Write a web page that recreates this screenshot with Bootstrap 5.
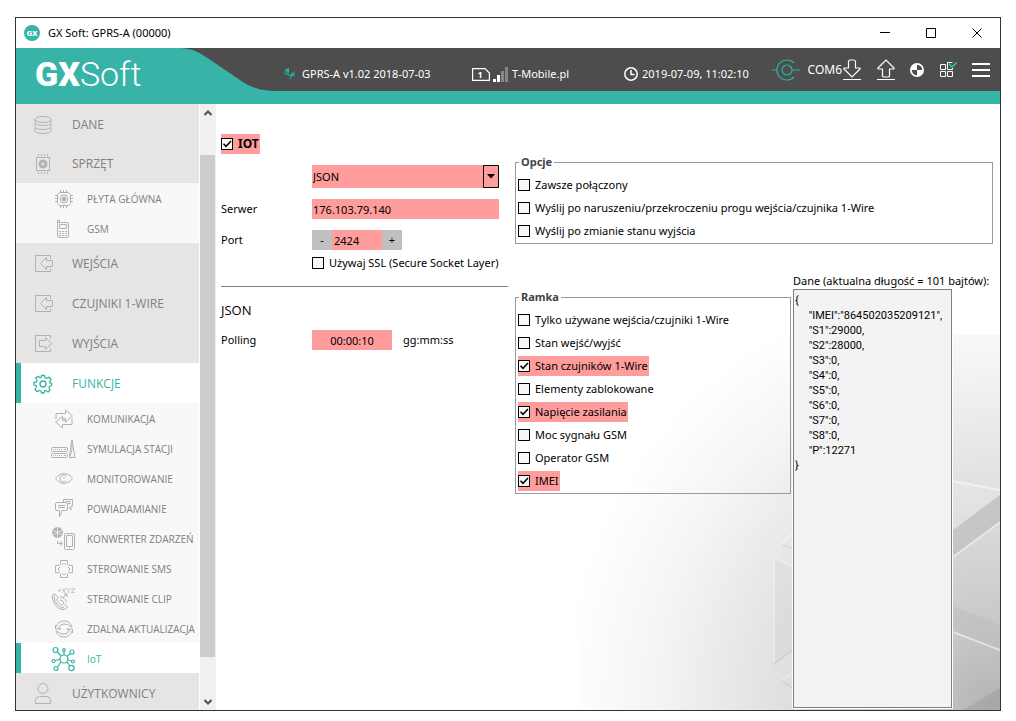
<!DOCTYPE html>
<html lang="pl">
<head>
<meta charset="utf-8">
<meta name="viewport" content="width=device-width, initial-scale=1">
<title>GX Soft: GPRS-A (00000)</title>
<link href="https://cdn.jsdelivr.net/npm/bootstrap@5.3.0/dist/css/bootstrap.min.css" rel="stylesheet">
<style>
:root{--teal:#37b3a8;--dark:#4d4d4d;--pink:#ff9c9c}
body{font-family:"Noto Sans","Open Sans",sans-serif;font-size:11px;line-height:16px;color:#000;background:#fff}
.page{height:100vh;padding:17px 15px 10px}
.window{border:1px solid #333;background:#fff}
svg{display:block;flex:none;fill:none}
button{border:0;background:none;padding:0;color:inherit}
.titlebar{height:30px;padding-left:8px}
.winbtn{width:46px;height:28px}
.topbar{background:var(--dark);border-bottom:13px solid var(--teal);height:56px;color:#fff}
.brand-area{width:268px;height:43px;position:relative}
.brand-area svg{position:absolute;top:0;left:0}
.brand-text{position:relative;font:300 34px/52px Roboto,sans-serif;color:#fff;padding-left:19px}
.brand-text b{font-weight:900}
.info{padding-top:9px}
.info-device{width:188px;gap:6px}
.info-net{width:152px}
.tools{gap:15px;padding-right:10px}
.port-name{font-size:12px}
.sidebar{width:183px;background:#f8f8f8;margin-right:1px;font-family:"Open Sans",sans-serif}
.sidebar a{display:flex;align-items:center;color:#808080;text-decoration:none;border-left:5px solid transparent;flex:none;white-space:nowrap}
.sidebar svg{stroke:#b2b2b2;overflow:visible}
.menu-main{height:40px;background:#e6e5e4;font-size:12px;padding:2px 0 0 10px;gap:17px}
.menu-sub{height:30px;font-size:10px;padding:1px 0 0 29px;gap:9px}
.menu-top{height:39px}
.sidebar a.on{background:#fff;color:var(--teal);border-left-color:var(--teal)}
.sidebar a.on svg{stroke:var(--teal)}
.scroller{width:16px;background:#f0f0f0}
.scroller button{height:17px;flex:none}
.thumb{background:#cdcdcd;margin-right:1px}
.work{position:relative;min-width:0}
.backdrop{position:absolute;right:0;bottom:0;z-index:0}
.form-area{position:relative;z-index:1;padding:0 7px 2px 5px;gap:7px}
.left-col{width:287px;padding-top:30px}
.line{display:flex;align-items:center;margin-top:11px}
.line-tight{margin-top:3px}
.line-last{margin-top:10px}
.cap{width:91px}
.hl{background:var(--pink)}
.form-check-input.tick{width:12px;height:12px;margin:0;border:1px solid #000;border-radius:0;background-color:#f8f8f8;flex:none;box-shadow:none}
.tick:checked{background-image:url("data:image/svg+xml,%3Csvg xmlns='http://www.w3.org/2000/svg' viewBox='0 0 10 10'%3E%3Cpath d='M1.5 4.8L4 7.3L9 2' fill='none' stroke='%23000' stroke-width='1.5'/%3E%3C/svg%3E");background-size:10px 10px}
.opt{display:flex;width:fit-content;align-items:center;height:20px;gap:5px;padding-right:1px;white-space:nowrap}
.opt-head{font-weight:700;font-size:12px}
.opt-row{height:23px;display:flex;align-items:center;padding:0 0 1px 2px}
.field{border:0;border-radius:0;background:var(--pink);color:#000;padding:0 1px;height:20px;font-size:11px;line-height:16px;min-width:0}
.wide{width:187px}
.pick{height:23px;appearance:none}
.pick-wrap{position:relative}
.pick-wrap svg{position:absolute;right:0;top:0;pointer-events:none}
.step{width:20px;height:20px;background:#c0c0c0}
.port-field{width:50px;padding-left:2px}
.time-field{width:80px}
.unit{margin-left:11px}
.rule{border:0;border-top:1px solid #808080;opacity:1;margin:13px 0 0}
.sub-head{font-size:13px;line-height:20px;font-weight:400;font-family:"Open Sans",sans-serif;margin:13px 0 0}
.group{border:1px solid #999;padding:4px 0 0}
.group legend{float:none;width:auto;font-size:11px;line-height:16px;font-weight:700;color:#444;margin:0 0 0 3px;padding:0 2px}
.options{margin-top:50px}
.lower{margin-top:29px;gap:2px}
.frame-col{width:276px;padding-top:16px}
.data-box{width:159px;flex:1;border:1px solid #808080;border-radius:0;background:#f3f3f3;resize:none;padding:3px 1px;font:11px/15px Roboto,sans-serif;color:#000;outline:1px solid #fff;overflow:hidden}
</style>
</head>
<body>
<div class="page">
<div class="window d-flex flex-column h-100">
  <div class="titlebar d-flex align-items-center flex-shrink-0">
    <svg width="16" height="16" viewBox="0 0 16 16"><circle cx="8" cy="8" r="8" fill="#37b3a8"/><text x="8" y="11" text-anchor="middle" font-family="Roboto" font-weight="900" font-size="8" fill="#fff">GX</text></svg>
    <span class="ms-1 ps-1">GX Soft: GPRS-A (00000)</span>
    <div class="ms-auto d-flex">
      <button class="winbtn d-flex align-items-center justify-content-center" aria-label="Minimalizuj"><svg width="10" height="10" stroke="#000"><path d="M0 4.500H10"/></svg></button>
      <button class="winbtn d-flex align-items-center justify-content-center" aria-label="Maksymalizuj"><svg width="10" height="10" stroke="#000"><path d="M.5 .5h9v9h-9z"/></svg></button>
      <button class="winbtn d-flex align-items-center justify-content-center" aria-label="Zamknij"><svg width="10" height="10" stroke="#000"><path d="M.5 .5l9 9M9.500 .5l-9 9"/></svg></button>
    </div>
  </div>

  <header class="topbar d-flex flex-shrink-0">
    <div class="brand-area flex-shrink-0">
      <svg width="268" height="43" viewBox="0 0 268 43"><path fill="#37b3a8" d="M0 0H160C174 0 180 2.500 190 9L224 32C236 40 244 43 262 43H0z"/></svg>
      <div class="brand-text"><b>GX</b>Soft</div>
    </div>
    <div class="info info-device d-flex align-items-center">
      <svg width="12" height="12" viewBox="0 0 12 12"><path fill="#2d7d76" d="M0 1L5 5L0 7zM6 5L11 3V9zM5 8L9 10L5 12z"/><path fill="#37b3a8" d="M1 2L5 0V5zM5 7L11 5L8 9zM1 5L5 6V8z"/></svg>
      <span>GPRS-A v1.02 2018-07-03</span>
    </div>
    <div class="info info-net d-flex align-items-center">
      <svg width="36" height="16" viewBox="0 0 36 16"><path stroke="#fff" stroke-width="1.200" d="M.6 2.600H13L17.400 7V14.400H.6z"/><path fill="#fff" d="M21 13h3v3h-3zM25 9h3v7h-3z"/><path fill="#868686" d="M29 5h3v11h-3zM33 1h3v15h-3z"/><text x="8" y="12" text-anchor="middle" font-family="Open Sans" font-weight="700" font-size="9" fill="#fff">1</text></svg>
      <span class="ms-1">T-Mobile.pl</span>
    </div>
    <div class="info d-flex align-items-center">
      <svg width="14" height="14" viewBox="0 0 14 14" stroke="#fff" stroke-width="1.500"><circle cx="7" cy="7" r="6.200"/><path d="M7 3V7.500H10.500"/></svg>
      <span class="ms-1">2019-07-09, 11:02:10</span>
    </div>
    <div class="tools ms-auto d-flex align-items-center">
      <div class="d-flex align-items-center">
        <svg width="28" height="22" viewBox="0 0 28 22" stroke="#2fb39d" stroke-width="1.200"><circle cx="15" cy="11" r="5"/><path d="M0 11H5M20 11H28M22 4A10 10 0 1 0 22 18"/></svg>
        <span class="port-name ms-2">COM6</span>
        <button aria-label="Odczytaj"><svg width="20" height="22" viewBox="0 0 20 22" stroke="#fff" stroke-width="1.200"><path d="M6.500 3Q6.500 1 8 1H12Q13.500 1 13.500 3V9H17.500Q18.500 9.500 18 10L10 18L2 10Q1.500 9.500 2.500 9H6.500zM1 20.500H19"/></svg></button>
      </div>
      <button aria-label="Zapisz"><svg width="18" height="22" viewBox="0 0 18 22" stroke="#fff" stroke-width="1.200"><path d="M5.500 17Q5.500 18 7 18H11Q12.500 18 12.500 17V10H16.500Q17.500 9.500 17 9L9 1L1 9Q.5 9.500 1.500 10H5.500zM0 20.500H18"/></svg></button>
      <button aria-label="Kontrast"><svg width="14" height="14" viewBox="0 0 14 14"><circle cx="7" cy="7" r="7" fill="#fff"/><path fill="#4d4d4d" d="M7 7V1.800A5.200 5.200 0 0 1 12.200 7zM7 7V12.200A5.200 5.200 0 0 1 1.800 7z"/></svg></button>
      <button aria-label="Moduły"><svg width="18" height="18" viewBox="0 0 18 18" stroke="#fff"><path d="M1.500 3.500h5v5h-5zM1.500 10.500h5v5h-5zM8.500 10.500h5v5h-5zM13.500 1.500H8.500v7H13.500V7"/><path stroke="#2fb39d" stroke-width="2" d="M10 3L13 6L18 1.500"/></svg></button>
      <button aria-label="Menu"><svg width="18" height="16" viewBox="0 0 18 16" stroke="#fff" stroke-width="2"><path d="M0 2H18M0 8H18M0 14H18"/></svg></button>
    </div>
  </header>

  <div class="d-flex flex-grow-1 overflow-hidden">
    <nav class="sidebar d-flex flex-column flex-shrink-0 overflow-hidden">
      <a href="#" class="menu-main menu-top"><svg width="24" height="24" viewBox="0 0 24 24"><ellipse cx="12" cy="6.500" rx="8" ry="3"/><path d="M4 6.500V9.500C4 13.500 20 13.500 20 9.500V6.500M4 11V13.500C4 17.500 20 17.500 20 13.500V11M4 15V17.500C4 21.500 20 21.500 20 17.500V15"/></svg>DANE</a>
      <a href="#" class="menu-main"><svg width="24" height="24" viewBox="0 0 24 24"><path d="M5.500 5.500h13v13h-13zM7.500 2v2M10.500 2v2M13.500 2v2M16.500 2v2M7.500 20v2M10.500 20v2M13.500 20v2M16.500 20v2"/><circle cx="12" cy="12" r="4" fill="#b2b2b2"/><path stroke="#e6e5e4" d="M12 10v4M10 12h4"/></svg>SPRZĘT</a>
      <a href="#" class="menu-sub"><svg width="28" height="28" viewBox="0 0 28 28"><path d="M9.500 7.500H18.500L20.500 9.500V18.500L18.500 20.500H9.500L7.500 18.500V9.500zM10.500 5v2M13.500 5v2M16.500 5v2M10.500 21v2M13.500 21v2M16.500 21v2M5 10.500h2M5 13.500h2M5 16.500h2M21 10.500h2M21 13.500h2M21 16.500h2"/><circle cx="14" cy="14" r="4"/><circle cx="14" cy="14" r="2" fill="#b2b2b2"/></svg>PŁYTA GŁÓWNA</a>
      <a href="#" class="menu-sub"><svg width="28" height="28" viewBox="0 0 28 28"><path d="M7.500 6.500V21Q7.500 22.500 9 22.500H17Q18.500 22.500 18.500 21V9Q18.500 7.500 17 7.500H7.500M7.500 7V5H9.500V7M9.500 9.500h7v4h-7zM9 16.500h2M12 16.500h2M15 16.500h2M9 18.500h2M12 18.500h2M15 18.500h2M9 20.500h2M12 20.500h2M15 20.500h2"/></svg>GSM</a>
      <a href="#" class="menu-main"><svg width="24" height="24" viewBox="0 0 24 24"><path d="M19.500 6.500V3.500H4.500V19.500H19.500V16.500M9.500 11.500L15.500 5.500V8.500H21.500V14.500H15.500V17.500z" stroke-linejoin="round"/></svg>WEJŚCIA</a>
      <a href="#" class="menu-main"><svg width="24" height="24" viewBox="0 0 24 24"><path d="M19.500 6.500V3.500H4.500V19.500H19.500V16.500M9.500 11.500L15.500 5.500V8.500H21.500V14.500H15.500V17.500z" stroke-linejoin="round"/></svg>CZUJNIKI 1-WIRE</a>
      <a href="#" class="menu-main"><svg width="24" height="24" viewBox="0 0 24 24"><path d="M19.500 6.500V3.500H4.500V19.500H19.500V16.500M20.500 11.500L14.500 5.500V8.500H8.500V14.500H14.500V17.500z" stroke-linejoin="round"/></svg>WYJŚCIA</a>
      <a href="#" class="menu-main on"><svg width="24" height="24" viewBox="0 0 24 24" stroke-width="1.300"><circle cx="12" cy="12" r="3"/><path d="M10.500 3.500H13.500L14.300 6L15.500 6.500L18 5.200L20 7.300L18.500 9.800L19 11L20.700 11.200V13.500L18.700 14.200L18 15.500L19 18L17 20L14.700 18.500L13.500 19L13 21H10.500L9.800 19L8.500 18.500L6 19.700L4 17.500L5.500 15L5 13.700L3 13V10.500L5.300 10L6 8.500L4.700 6L7 4.200L9 5.700L10 5.500z" stroke-linejoin="round"/></svg>FUNKCJE</a>
      <a href="#" class="menu-sub"><svg width="28" height="28" viewBox="0 0 28 28"><path d="M6 14V8.500H15.500V5L22.500 11L15.500 17V13.500H13M22 13.500V19.500H12.500V23L5.500 17L12.500 11.500V15.500H15" stroke-linejoin="round"/></svg>KOMUNIKACJA</a>
      <a href="#" class="menu-sub"><svg width="28" height="28" viewBox="0 0 28 28"><rect x="1.500" y="12.500" width="16" height="4" rx="1"/><rect x="1.500" y="18.500" width="16" height="4" rx="1"/><path d="M3 14.500H12M3 20.500H12" stroke-dasharray="1 1"/><path d="M14 14.500h2M14 20.500h2M19.500 22.500V20L22 5L25 22.500zM22 5V15L19.500 22"/></svg>SYMULACJA STACJI</a>
      <a href="#" class="menu-sub"><svg width="28" height="28" viewBox="0 0 28 28"><path d="M5.500 13.500C10 7 18 7 22.500 13.500C18 20 10 20 5.500 13.500zM16.500 11.500A3.500 3.500 0 1 0 16.500 15.500M14 12V13.500"/></svg>MONITOROWANIE</a>
      <a href="#" class="menu-sub"><svg width="28" height="28" viewBox="0 0 28 28"><path d="M7 7.500H16Q17.500 7.500 17.500 9V14Q17.500 15.500 16 15.500H12L9.500 22V15.500H7Q5.500 15.500 5.500 14V9Q5.500 7.500 7 7.500M8 10.500H15M8 12.500H15M13.500 7V4.500H22.500V11H21V15L19 12M15.500 6.500H21M18 8.500H21" stroke-linejoin="round"/></svg>POWIADAMIANIE</a>
      <a href="#" class="menu-sub"><svg width="28" height="28" viewBox="0 0 28 28"><circle cx="7.500" cy="7.500" r="5" fill="#b2b2b2"/><path stroke="#f8f8f8" stroke-width=".7" d="M7.500 2V13M2.500 5L12.500 10M12.500 5L2.500 10"/><rect x="14.500" y="8.500" width="10" height="16" rx="1"/><path d="M16.500 10.500h6v11h-6zM19 23h1M7.500 16V18.500H12M10 16L12.500 18.500L10 21"/></svg>KONWERTER ZDARZEŃ</a>
      <a href="#" class="menu-sub"><svg width="28" height="28" viewBox="0 0 28 28"><path d="M10.500 9V5.500H17.500V9L19 10.500H22.500V17.500H19L17.500 19V22.500H10.500V19L9 17.500H5.500V10.500H9zM14 8L12 10M14 8L16 10M14 20L12 18M14 20L16 18M8 14L10 12M8 14L10 16M20 14L18 12M20 14L18 16"/></svg>STEROWANIE SMS</a>
      <a href="#" class="menu-sub"><svg width="28" height="28" viewBox="0 0 28 28"><text x="7" y="8" font-family="Open Sans" font-size="8" fill="#b2b2b2" stroke="none">+XYZ</text><path d="M6 10L3.500 9Q1 12 4 18Q8 25 14 24.500Q16.500 24 17.500 22L14 18.500L11.500 20.500Q7.500 17.500 6.500 14.500L8.500 13zM4 11Q4 17 8 20.500T14 22.500M10 15Q13 15 14 18M10 12Q15 12 16.500 17M13 12.500L17 9M17 12V9H14" stroke-linejoin="round"/></svg>STEROWANIE CLIP</a>
      <a href="#" class="menu-sub"><svg width="28" height="28" viewBox="0 0 28 28"><path d="M6 12Q8 6 14 6T22 12L20 11Q18 9 14 9T8.500 13L11 14H5.500V10M22 16Q20 22 14 22T6 16L8 17Q10 19 14 19T19.500 15L17 14H22.500V18" stroke-linejoin="round"/></svg>ZDALNA AKTUALIZACJA</a>
      <a href="#" class="menu-sub on"><svg width="28" height="28" viewBox="0 0 28 28" stroke-width="1.200"><circle cx="14" cy="14" r="4"/><circle cx="5.500" cy="5" r="2.500"/><circle cx="14" cy="5" r="1.300"/><circle cx="22" cy="7" r="2"/><circle cx="3.500" cy="16" r="1.500"/><circle cx="23" cy="16.500" r="1.500"/><circle cx="6" cy="23.500" r="2"/><circle cx="21.500" cy="23" r="2.700"/><path d="M7.500 7L11 11M14 6.500V10M20.500 8.500L17 11.500M5 15.500L10 14.500M18 15L21.500 16M7.500 22L11 17M17 17L19.500 20.500"/></svg>IoT</a>
      <a href="#" class="menu-main"><svg width="24" height="24" viewBox="0 0 24 24"><circle cx="12" cy="6.500" r="5"/><path d="M4.500 21.500V18Q5 14.500 8.500 14.500H15.500Q19 14.500 19.500 18V21.500z"/></svg>UŻYTKOWNICY</a>
    </nav>
    <div class="scroller d-flex flex-column flex-shrink-0">
      <button class="d-flex align-items-center justify-content-center" aria-label="W górę"><svg width="8" height="6" stroke="#505050" stroke-width="2"><path d="M.5 5L4 1.500L7.500 5"/></svg></button>
      <div style="flex:34"></div>
      <div class="thumb" style="flex:502"></div>
      <div style="flex:36"></div>
      <button class="d-flex align-items-center justify-content-center" aria-label="W dół"><svg width="8" height="6" stroke="#505050" stroke-width="2"><path d="M.5 1L4 4.500L7.500 1"/></svg></button>
    </div>

    <main class="work flex-grow-1 overflow-hidden">
      <svg class="backdrop" width="422" height="375" viewBox="0 0 422 375">
        <defs>
          <radialGradient id="glow" gradientUnits="userSpaceOnUse" cx="422" cy="375" r="440"><stop offset="0" stop-color="#b2b2b2"/><stop offset=".2" stop-color="#c8c8c8"/><stop offset=".5" stop-color="#e0e0e0"/><stop offset=".8" stop-color="#f5f5f5"/><stop offset="1" stop-color="#fff"/></radialGradient>
          <linearGradient id="shade" x1="0" y1="0" x2="0" y2="1"><stop offset="0" stop-color="#888" stop-opacity=".3"/><stop offset="1" stop-color="#888" stop-opacity=".05"/></linearGradient>
        </defs>
        <path fill="url(#glow)" d="M0 0H422V375H0z"/>
        <path fill="#fff" fill-opacity=".15" d="M375 146L422 155V160L375 195z"/>
        <path fill="url(#shade)" d="M422 160V187L375 222V195zM375 271L422 289V315L375 297z"/>
        <path fill="#777" fill-opacity=".2" d="M422 353L385 375H422z"/>
        <path stroke="#fff" stroke-opacity=".5" stroke-width="2" d="M375 146L422 155M375 222L422 187M375 297L422 315"/>
        <path fill="#999" fill-opacity=".08" d="M196 223L216 232V315L196 330z"/>
        <path stroke="#fff" stroke-opacity=".3" stroke-width="2" d="M204 209L216 197M216 232L196 223V328M204 345L216 336"/>
        <path stroke="#aaa" stroke-opacity=".4" d="M204 210L216 214M195 330L216 314M204 346L216 354"/>
      </svg>
      <form class="form-area d-flex h-100">
        <div class="left-col flex-shrink-0">
          <label class="opt opt-head hl"><input type="checkbox" class="form-check-input tick" checked>IOT</label>
          <div class="line">
            <div class="cap"></div>
            <div class="pick-wrap"><select class="field wide pick" aria-label="Format"><option>JSON</option></select><svg width="16" height="23" viewBox="0 0 16 23"><path stroke="#000" d="M.5 .5h15v22h-15z"/><path fill="#000" d="M4 9h8l-4 4.500z"/></svg></div>
          </div>
          <div class="line"><label class="cap" for="srv">Serwer</label><input id="srv" class="field wide" value="176.103.79.140"></div>
          <div class="line"><label class="cap" for="port">Port</label><button type="button" class="step">-</button><input id="port" class="field port-field" value="2424"><button type="button" class="step">+</button></div>
          <div class="line line-tight"><div class="cap"></div><label class="opt"><input type="checkbox" class="form-check-input tick">Używaj SSL (Secure Socket Layer)</label></div>
          <hr class="rule">
          <h2 class="sub-head">JSON</h2>
          <div class="line line-last"><label class="cap" for="poll">Polling</label><input id="poll" class="field time-field text-center" value="00:00:10"><span class="unit">gg:mm:ss</span></div>
        </div>
        <div class="d-flex flex-column flex-grow-1">
          <fieldset class="group options">
            <legend>Opcje</legend>
            <div class="opt-row"><label class="opt"><input type="checkbox" class="form-check-input tick">Zawsze połączony</label></div>
            <div class="opt-row"><label class="opt"><input type="checkbox" class="form-check-input tick">Wyślij po naruszeniu/przekroczeniu progu wejścia/czujnika 1-Wire</label></div>
            <div class="opt-row"><label class="opt"><input type="checkbox" class="form-check-input tick">Wyślij po zmianie stanu wyjścia</label></div>
          </fieldset>
          <div class="lower d-flex flex-grow-1">
            <div class="frame-col">
              <fieldset class="group">
                <legend>Ramka</legend>
                <div class="opt-row"><label class="opt"><input type="checkbox" class="form-check-input tick">Tylko używane wejścia/czujniki 1-Wire</label></div>
                <div class="opt-row"><label class="opt"><input type="checkbox" class="form-check-input tick">Stan wejść/wyjść</label></div>
                <div class="opt-row"><label class="opt hl"><input type="checkbox" class="form-check-input tick" checked>Stan czujników 1-Wire</label></div>
                <div class="opt-row"><label class="opt"><input type="checkbox" class="form-check-input tick">Elementy zablokowane</label></div>
                <div class="opt-row"><label class="opt hl"><input type="checkbox" class="form-check-input tick" checked>Napięcie zasilania</label></div>
                <div class="opt-row"><label class="opt"><input type="checkbox" class="form-check-input tick">Moc sygnału GSM</label></div>
                <div class="opt-row"><label class="opt"><input type="checkbox" class="form-check-input tick">Operator GSM</label></div>
                <div class="opt-row"><label class="opt hl"><input type="checkbox" class="form-check-input tick" checked>IMEI</label></div>
              </fieldset>
            </div>
            <div class="d-flex flex-column flex-grow-1">
              <label for="payload" class="text-nowrap">Dane (aktualna długość = 101 bajtów):</label>
              <textarea id="payload" class="data-box" readonly>{
     "IMEI":"864502035209121",
     "S1":29000,
     "S2":28000,
     "S3":0,
     "S4":0,
     "S5":0,
     "S6":0,
     "S7":0,
     "S8":0,
     "P":12271
}</textarea>
            </div>
          </div>
        </div>
      </form>
    </main>
  </div>
</div>
</div>
<script src="https://cdn.jsdelivr.net/npm/bootstrap@5.3.0/dist/js/bootstrap.bundle.min.js"></script>
</body>
</html>
